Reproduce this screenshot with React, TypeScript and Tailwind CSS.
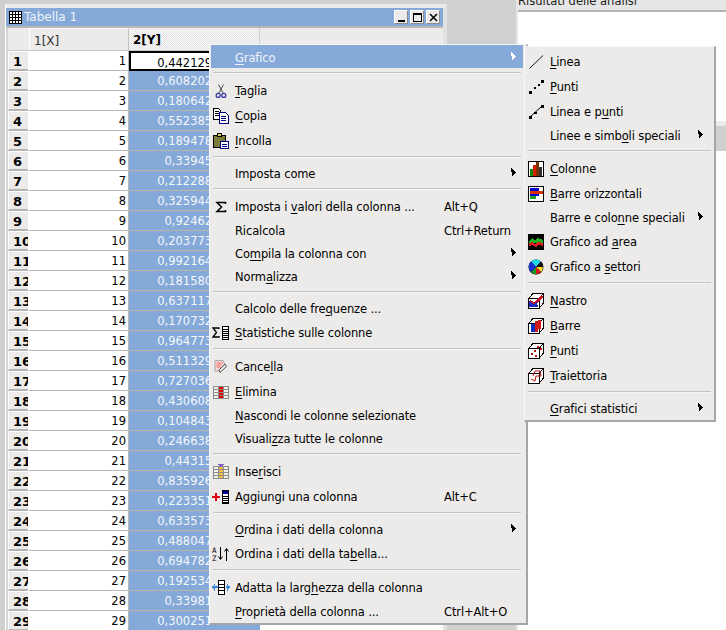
const VALUES = [
  '0,442129347815', '0,608202916543', '0,180642775120', '0,552385601947', '0,189478233056',
  '0,33945218763', '0,212288940615', '0,325944178320', '0,92462305718', '0,203773514826',
  '0,992164087253', '0,181580362947', '0,637117425908', '0,170732861594', '0,964773120486',
  '0,511329746058', '0,727036915482', '0,430608257193', '0,104843672915', '0,246638509127',
  '0,44315072846', '0,835926418730', '0,223351964072', '0,633573180294', '0,488047625319',
  '0,694782301856', '0,192534870641', '0,33981426075', '0,300251134767',
];

type Rect = [number, number, number, number, string];

function Px({ r, size = 16 }: { r: Rect[]; size?: number }) {
  return (
    <svg width={size} height={size} viewBox={`0 0 ${size} ${size}`} shapeRendering="crispEdges">
      {r.map(([x, y, w, h, c], i) => (
        <rect key={i} x={x} y={y} width={w} height={h} fill={c} />
      ))}
    </svg>
  );
}

const Scissors = () => (
  <svg width="16" height="16" viewBox="0 0 16 16" fill="none">
    <path d="M5.5 1.5 L10 10 M10.5 1.5 L6 10" stroke="#4a4a4a" strokeWidth="1" />
    <circle cx="5.2" cy="12.4" r="2" stroke="#3a3aa0" strokeWidth="1.3" />
    <circle cx="10.8" cy="12.4" r="2" stroke="#3a3aa0" strokeWidth="1.3" />
  </svg>
);

const CopyIcon = () => (
  <svg width="16" height="16" viewBox="0 0 16 16" shapeRendering="crispEdges">
    <path d="M0.5 0.5h5l2 2v9h-7z" fill="#fff" stroke="#000" />
    <path d="M2 3h4M2 5h4M2 7h4" stroke="#000" />
    <path d="M6.5 4.5h6l2.5 2.5v8h-8.500z" fill="#fff" stroke="#000080" />
    <path d="M8 8h5M8 10h5M8 12h5" stroke="#000080" />
  </svg>
);

const PasteIcon = () => (
  <svg width="16" height="16" viewBox="0 0 16 16" shapeRendering="crispEdges">
    <rect x="0.5" y="2.500" width="12" height="12" fill="#7b7b3c" stroke="#000" />
    <rect x="4.500" y="0.500" width="4" height="3" fill="#d8d060" stroke="#000" />
    <rect x="7.500" y="8.500" width="8" height="7" fill="#fff" stroke="#000080" />
    <path d="M9 11h5M9 13h5" stroke="#000080" />
  </svg>
);

const Sigma = () => (
  <svg width="14" height="14" viewBox="0 0 14 14" fill="none">
    <path d="M11.500 4 V2.500 H3 L7.500 7 L3 11.500 H11.500 V10" stroke="#000" strokeWidth="1.500" />
  </svg>
);

const StatsIcon = () => (
  <svg width="18" height="16" viewBox="0 0 18 16" shapeRendering="crispEdges">
    <path d="M7 4V3H1l3.500 4.500L1 12h6v-1" fill="none" stroke="#000" strokeWidth="1.300" shapeRendering="auto" />
    <rect x="10.500" y="1.500" width="6" height="13" fill="#fff" stroke="#000" />
    <path d="M11 4h5M11 6h5M11 8h5M11 10h5M11 12h5" stroke="#000" />
  </svg>
);

const Eraser = () => (
  <svg width="16" height="16" viewBox="0 0 16 16">
    <path d="M2 1.500h8l1.500 3v3L7 12H2z" fill="#fbd8d8" stroke="#a8a8a8" />
    <path d="M3.500 4h6M3.500 6h5M3.500 8h4" stroke="#e86a6a" />
    <path d="M7 13.500l6.500-6-1.500-2.500-6 6z" fill="#e8e8e8" stroke="#555" />
  </svg>
);

function GridIcon({ fill, top }: { fill: string; top?: string }) {
  return (
    <svg width="16" height="16" viewBox="0 0 16 16" shapeRendering="crispEdges">
      <rect x="0.500" y="2.500" width="15" height="12" fill="#f4f0ea" stroke="#8a8a8a" />
      <rect x="6" y="3" width="5" height="11" fill={fill} />
      <path d="M1 5.500h14M1 8.500h14M1 11.500h14M5.500 3v11M10.500 3v11" stroke="#8a8a8a" />
      {top && <path d="M5 0h6v1h-1v1h-1v1h-2v-1h-1v-1h-1z" fill={top} />}
    </svg>
  );
}

const AddColumn = () => (
  <svg width="18" height="16" viewBox="0 0 18 16" shapeRendering="crispEdges">
    <path d="M3 4h2v3h3v2H5v3H3V9H0V7h3z" fill="#e8000c" />
    <rect x="10.500" y="1.500" width="6" height="13" fill="#fff" stroke="#000" />
    <rect x="11" y="2" width="5" height="3" fill="#0000a0" />
    <path d="M11 7h5M11 9h5M11 11h5M11 13h5" stroke="#000" />
  </svg>
);

const SortIcon = () => (
  <svg width="18" height="16" viewBox="0 0 18 16">
    <text x="0" y="6.500" fontSize="7.500" fontFamily="'DejaVu Sans Mono', monospace" fill="#000">A</text>
    <text x="0" y="14.500" fontSize="7.500" fontFamily="'DejaVu Sans Mono', monospace" fill="#000">Z</text>
    <path d="M8.500 1v12M6.500 10.500l2 3 2-3" fill="none" stroke="#000" />
    <path d="M14.500 15V3M12.500 5.500l2-3 2 3" fill="none" stroke="#000" />
  </svg>
);

const FitIcon = () => (
  <svg width="18" height="16" viewBox="0 0 18 16" shapeRendering="crispEdges">
    <rect x="6.500" y="0.500" width="6" height="14" fill="#fff" stroke="#000" />
    <path d="M7 4h5M7 7h5M7 10h5" stroke="#000" />
    <path d="M0 7h6M14 7h4" stroke="#3a8ad8" strokeWidth="2" />
    <path d="M2 4h1v7H2zM1 6h1v3H1zM15 4h1v7h-1zM16 6h1v3h-1z" fill="#3a8ad8" />
  </svg>
);

const LineIcon = () => (
  <svg width="16" height="16" viewBox="0 0 16 16">
    <path d="M1.500 14.500 L15 1.500" stroke="#000" strokeWidth="0.900" />
  </svg>
);

const PointsIcon = () => (
  <Px r={[[1, 12, 3, 3, '#000'], [6, 8, 2, 2, '#000'], [10, 5, 2, 2, '#000'], [13, 1, 3, 3, '#000']]} />
);

const LinePointsIcon = () => (
  <svg width="16" height="16" viewBox="0 0 16 16" shapeRendering="crispEdges">
    <path d="M2 13 L14 2" stroke="#000" shapeRendering="auto" />
    <rect x="1" y="12" width="3" height="3" />
    <rect x="6" y="8" width="3" height="2" />
    <rect x="13" y="1" width="3" height="3" />
  </svg>
);

const ColumnsIcon = () => (
  <Px r={[[0, 0, 16, 16, '#000'], [1, 1, 14, 14, '#fff'], [2, 8, 3, 7, '#0a8a0a'], [5, 4, 3, 11, '#d82000'], [8, 1, 3, 14, '#7a3000'], [11, 6, 3, 9, '#303030']]} />
);

const BarsIcon = () => (
  <Px r={[[0, 0, 16, 16, '#000'], [1, 1, 14, 14, '#fff'], [2, 2, 9, 3, '#0000d0'], [2, 5, 13, 3, '#d83000'], [2, 8, 9, 2, '#0000d0'], [2, 10, 6, 3, '#20a020']]} />
);

const AreaIcon = () => (
  <svg width="16" height="16" viewBox="0 0 16 16" shapeRendering="crispEdges">
    <rect width="16" height="16" fill="#000" />
    <path d="M1 7L4 4l3 2 3-2 5 2v3H1z" fill="#20b020" />
    <path d="M1 9L4 8l3 2 3-2 5 1v3l-4-1-3 2-4-2-3 1z" fill="#e02020" />
  </svg>
);

const PieIcon = () => (
  <svg width="16" height="16" viewBox="0 0 16 16">
    <circle cx="8" cy="8" r="7.500" fill="#000" />
    <path d="M8 8L3 2.500A7 7 0 0 1 13 2.500z" fill="#20d8e8" />
    <path d="M8 8L13 2.500A7 7 0 0 1 15 8z" fill="#101010" />
    <path d="M8 8L15 8A7 7 0 0 1 13 13z" fill="#f0e020" />
    <path d="M8 8L13 13A7 7 0 0 1 8 15z" fill="#e01818" />
    <path d="M8 8L8 15A7 7 0 0 1 3 13z" fill="#18a018" />
    <path d="M8 8L3 13A7 7 0 0 1 3 2.500z" fill="#1830d0" />
  </svg>
);

function Box3D({ children }: { children?: React.ReactNode }) {
  return (
    <svg width="16" height="16" viewBox="0 0 16 16" shapeRendering="crispEdges">
      <path d="M0.500 5.500L5 0.500H15.500V10L11 15.500H0.500z" fill="#fff" stroke="#000" />
      <path d="M0.500 5.500H11V15.500M11 5.500L15.500 0.500" fill="none" stroke="#000" />
      {children}
    </svg>
  );
}

const RibbonIcon = () => (
  <Box3D>
    <path d="M2 7l4 2 7-7 2 2-9 9-4-2z" fill="#c01828" />
    <path d="M1 8l5 3 3-2 1 5H1z" fill="#1828c0" />
  </Box3D>
);

const Bars3DIcon = () => (
  <Box3D>
    <rect x="3" y="6" width="4" height="8" fill="#1030c0" />
    <rect x="7" y="3" width="3" height="11" fill="#d01818" />
    <rect x="10" y="2" width="3" height="9" fill="#d01818" />
  </Box3D>
);

const Points3DIcon = () => (
  <Box3D>
    <rect x="3" y="10" width="2" height="2" fill="#c01010" />
    <rect x="6" y="7" width="2" height="2" fill="#c01010" />
    <rect x="9" y="3" width="2" height="2" fill="#c01010" />
    <rect x="12" y="5" width="2" height="2" fill="#c01010" />
    <rect x="7" y="12" width="2" height="2" fill="#c01010" />
  </Box3D>
);

const TrajectoryIcon = () => (
  <Box3D>
    <path d="M3 11L7 13 8 8 13 8 12 3 7 3 5 8" fill="none" stroke="#c01010" shapeRendering="auto" />
  </Box3D>
);

function Label({ text }: { text: string }) {
  // & marks the mnemonic letter, as in the toolkit's own menu strings
  const at = text.indexOf('&');
  if (at < 0) return <span>{text}</span>;
  return (
    <span>
      {text.slice(0, at)}
      <span className="underline underline-offset-2">{text[at + 1]}</span>
      {text.slice(at + 2)}
    </span>
  );
}

type Entry = {
  text?: string;
  icon?: React.ReactNode;
  key2?: string;
  sub?: boolean;
  tall?: boolean;
  active?: boolean;
};

const MAIN: Entry[] = [
  { text: '&Grafico', sub: true, active: true },
  {},
  { text: '&Taglia', icon: <Scissors />, tall: true },
  { text: '&Copia', icon: <CopyIcon />, tall: true },
  { text: '&Incolla', icon: <PasteIcon />, tall: true },
  {},
  { text: 'Imposta come', sub: true },
  {},
  { text: 'Imposta i &valori della colonna ...', icon: <Sigma />, key2: 'Alt+Q', tall: true },
  { text: 'Ricalcola', key2: 'Ctrl+Return' },
  { text: 'Co&mpila la colonna con', sub: true },
  { text: 'Norm&alizza', sub: true },
  {},
  { text: 'Calcolo delle fre&quenze ...' },
  { text: '&Statistiche sulle colonne', icon: <StatsIcon />, tall: true },
  {},
  { text: 'Cance&lla', icon: <Eraser />, tall: true },
  { text: '&Elimina', icon: <GridIcon fill="#e80000" />, tall: true },
  { text: '&Nascondi le colonne selezionate' },
  { text: 'Visuali&zza tutte le colonne' },
  {},
  { text: 'Inse&risci', icon: <GridIcon fill="#f0c040" top="#8060c8" />, tall: true },
  { text: 'Aggiungi una colonna', icon: <AddColumn />, key2: 'Alt+C', tall: true },
  {},
  { text: '&Ordina i dati della colonna', sub: true },
  { text: 'Ordina i dati della ta&bella...', icon: <SortIcon />, tall: true },
  {},
  { text: 'Adatta la larg&hezza della colonna', icon: <FitIcon />, tall: true },
  { text: '&Proprietà della colonna ...', key2: 'Ctrl+Alt+O' },
];

const CHARTS: Entry[] = [
  { text: '&Linea', icon: <LineIcon />, tall: true },
  { text: '&Punti', icon: <PointsIcon />, tall: true },
  { text: 'Linea e p&unti', icon: <LinePointsIcon />, tall: true },
  { text: 'Linee e simb&oli speciali', sub: true },
  {},
  { text: '&Colonne', icon: <ColumnsIcon />, tall: true },
  { text: '&Barre orizzontali', icon: <BarsIcon />, tall: true },
  { text: 'Barre e colo&nne speciali', sub: true },
  { text: 'Grafico ad &area', icon: <AreaIcon />, tall: true },
  { text: 'Grafico a &settori', icon: <PieIcon />, tall: true },
  {},
  { text: '&Nastro', icon: <RibbonIcon />, tall: true },
  { text: '&Barre', icon: <Bars3DIcon />, tall: true },
  { text: '&Punti', icon: <Points3DIcon />, tall: true },
  { text: '&Traiettoria', icon: <TrajectoryIcon />, tall: true },
  {},
  { text: '&Grafici statistici', sub: true },
];

function Arrow({ white }: { white?: boolean }) {
  return (
    <svg width="5" height="8" viewBox="0 0 5 8" className="block" shapeRendering="crispEdges">
      <path d="M0 0h1v1h1v1h1v1h1v1h1v1h-1v1h-1v1h-1v1h-1v-1h0z" fill={white ? '#fff' : '#000'} />
    </svg>
  );
}

function MenuRow({ item, labelWidth, arrowGap }: { item: Entry; labelWidth: string; arrowGap: string }) {
  if (!item.text) {
    return (
      <div className="h-[9px] flex items-center px-[2px]">
        <div className="h-[2px] w-full bg-[#c4c3c1] border-b border-b-[#f4f4f4]" />
      </div>
    );
  }
  return (
    <div
      className={`flex items-center pt-[4px] ${item.tall ? 'h-[25px]' : 'h-[23px]'} ${
        item.active ? 'bg-[#85a9d8] text-[#f0f4fa]' : 'text-black'
      }`}
    >
      <div className="w-[24px] pr-[4px] -mt-[2px] flex justify-center shrink-0">{item.icon}</div>
      <div className={`${labelWidth} whitespace-nowrap shrink-0`}>
        <Label text={item.text} />
      </div>
      {item.key2 && <div className="whitespace-nowrap">{item.key2}</div>}
      {item.sub && (
        <div className={`ml-auto -mt-[6px] ${arrowGap}`}>
          <Arrow white={item.active} />
        </div>
      )}
    </div>
  );
}

function Menu({ items, className, labelWidth, arrowGap }: { items: Entry[]; className: string; labelWidth: string; arrowGap: string }) {
  return (
    <div
      className={`absolute bg-[#ecebe9] tracking-[-0.12px] border-t border-l border-t-[#f8f8f8] border-l-[#f8f8f8] border-r-2 border-b-2 border-r-[#a6a6a6] border-b-[#a6a6a6] ${className}`}
    >
      {items.map((item, i) => (
        <MenuRow key={i} item={item} labelWidth={labelWidth} arrowGap={arrowGap} />
      ))}
    </div>
  );
}

function TitleButton({ children }: { children: React.ReactNode }) {
  return (
    <div className="w-[14px] h-[14px] bg-[#ecebe9] border-t border-l border-white border-r border-b border-r-[#8a8a8a] border-b-[#8a8a8a] flex items-center justify-center">
      {children}
    </div>
  );
}

function TableWindow() {
  return (
    <div className="ml-[5px] mt-[4px] w-[442px] h-[626px] shrink-0 flex flex-col bg-[#d6d6d6] border-t-4 border-t-[#ececec] border-l border-l-white border-r-[4px] border-r-[#e2e2e2]">
      <div className="h-[18px] shrink-0 bg-[#85a9d8] flex items-center pl-[3px] pr-[3px] text-[#eef3fa] text-[12px]">
        <svg width="13" height="13" viewBox="0 0 13 13" shapeRendering="crispEdges">
          <rect x="0.500" y="0.500" width="12" height="12" fill="#fff" stroke="#000" />
          <path d="M0 3.500h13M0 6.500h13M0 9.500h13M3.500 0v13M6.500 0v13M9.500 0v13" stroke="#000" />
        </svg>
        <span className="ml-[2px] mr-auto">Tabella 1</span>
        <div className="flex gap-[2px]">
          <TitleButton>
            <div className="w-[7px] h-[2px] bg-black mt-[7px]" />
          </TitleButton>
          <TitleButton>
            <div className="w-[9px] h-[9px] border border-black border-t-2" />
          </TitleButton>
          <TitleButton>
            <svg width="9" height="9" viewBox="0 0 9 9">
              <path d="M1 1l7 7M8 1L1 8" stroke="#000" strokeWidth="1.500" />
            </svg>
          </TitleButton>
        </div>
      </div>
      <div className="h-[2px] shrink-0 bg-[#b8b8b8]" />
      <div className="flex-1 ml-[2px] bg-white overflow-hidden flex flex-col">
        <div className="h-[23px] shrink-0 flex bg-[#ecebe9] border-b border-b-[#c8c8c8] text-[12px]">
          <div className="w-[21px] shrink-0" />
          <div className="w-[100px] shrink-0 pl-[4px] pt-[2px] flex items-center border-t border-l border-t-white border-l-white border-r border-r-[#c0c0c0] text-[#333]">
            1[X]
          </div>
          <div className="w-[131px] shrink-0 pl-[4px] pt-[2px] flex items-center font-bold border-r border-r-[#d0d0d0] bg-[repeating-conic-gradient(#e4e4e4_0_25%,#f8f8f8_0_50%)] bg-[length:2px_2px]">
            2[Y]
          </div>
        </div>
        {VALUES.map((v, i) => (
          <div key={i} className="h-[20px] shrink-0 flex">
            <div className="w-[20px] mr-[1px] shrink-0 overflow-hidden whitespace-nowrap pl-[4px] pt-[1px] font-bold text-[13px] leading-[18px] bg-[#ecebe9] border-t border-l border-white border-b-2 border-b-[#b4b4b4]">
              {i + 1}
            </div>
            <div className="w-[100px] shrink-0 text-right pr-[2px] pt-[1px] leading-[19px] border-b border-b-[#b8b8b8] border-r border-r-[#b8b8b8]">
              {i + 1}
            </div>
            {i === 0 ? (
              <div className="w-[131px] shrink-0 text-right pr-[2px] leading-[18px] pt-[1px] border-2 border-black">{v}</div>
            ) : (
              <div className="w-[131px] shrink-0 text-right pr-[4px] pt-[1px] leading-[19px] bg-[#85a9d8] text-[#f4f7fc] border-b border-b-[#bcb4a4]">
                {v}
              </div>
            )}
          </div>
        ))}
      </div>
    </div>
  );
}

function ResultsPanel() {
  return (
    <div className="ml-auto w-[210px] h-[630px] shrink-0 flex flex-col border-l-2 border-l-[#e6e6e6]">
      <div className="h-[10px] shrink-0 bg-[#e6e6e6] overflow-hidden leading-[14px] text-[#222]">
        <div className="-mt-[6px]">Risultati delle analisi</div>
      </div>
      <div className="h-[2px] shrink-0 bg-[#b4b4b4]" />
      <div className="h-[109px] shrink-0 bg-white" />
      <div className="h-[30px] shrink-0 bg-[#d0d0d0] border-t-[5px] border-t-[#ececec]" />
      <div className="flex-1 bg-white" />
    </div>
  );
}

export default function App() {
  return (
    <div className="relative w-[726px] h-[630px] overflow-hidden flex items-start bg-[#d0d0d0] text-[11.5px] font-['DejaVu_Sans',sans-serif]">
      <TableWindow />
      <ResultsPanel />
      <Menu items={MAIN} className="left-[209px] top-[44px] w-[319px] h-[581px] pl-[1px] pr-[3px]" labelWidth="w-[209px]" arrowGap="mr-[7px]" />
      <Menu items={CHARTS} className="left-[524px] top-[46px] w-[192px] h-[376px] pt-[1px] pl-[1px] pr-[1px]" labelWidth="w-auto" arrowGap="mr-[10px]" />
    </div>
  );
}
